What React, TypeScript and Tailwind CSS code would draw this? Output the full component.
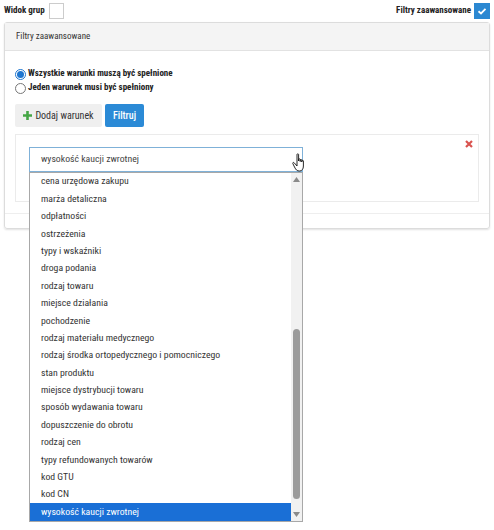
import React from 'react';

const OPTIONS = [
    'cena urzędowa zakupu',
    'marża detaliczna',
    'odpłatności',
    'ostrzeżenia',
    'typy i wskaźniki',
    'droga podania',
    'rodzaj towaru',
    'miejsce działania',
    'pochodzenie',
    'rodzaj materiału medycznego',
    'rodzaj środka ortopedycznego i pomocniczego',
    'stan produktu',
    'miejsce dystrybucji towaru',
    'sposób wydawania towaru',
    'dopuszczenie do obrotu',
    'rodzaj cen',
    'typy refundowanych towarów',
    'kod GTU',
    'kod CN',
    'wysokość kaucji zwrotnej',
];

const Radio = ({ checked, label }: { checked?: boolean; label: string }) => (
    <label className="flex items-center gap-[2px] h-[14px]">
        <span
            className={
                checked
                    ? 'w-[11px] h-[11px] rounded-full border border-[#1e76d0] bg-white flex items-center justify-center'
                    : 'w-[11px] h-[11px] rounded-full border border-[#777] bg-white'
            }
        >
            {checked && <span className="w-[7px] h-[7px] rounded-full bg-[#1e76d0]" />}
        </span>
        <span className="font-bold text-[9px] text-[#222]">{label}</span>
    </label>
);

export default function App() {
    return (
        <div
            className="relative w-[494px] h-[530px] bg-white text-[#333]"
            style={{ fontFamily: '"Roboto Condensed", Roboto, "Liberation Sans", sans-serif' }}
        >
            {/* Top toggles */}
            <div className="flex items-center justify-between pl-[4px] pr-[4px] pt-[3px] h-[19px]">
                <div className="flex items-center gap-[4px]">
                    <span className="font-bold text-[9px] text-[#222]">Widok grup</span>
                    <span className="w-[15px] h-[16px] border border-[#ccc] bg-white" />
                </div>
                <div className="flex items-center gap-[3px]">
                    <span className="font-bold text-[9px] text-[#222]">Filtry zaawansowane</span>
                    <span className="w-[16px] h-[16px] bg-[#2b88d2] flex items-center justify-center">
                        <svg width="10" height="10" viewBox="0 0 10 10">
                            <path d="M1.5 5.2 L4 7.4 L8.5 2.8" fill="none" stroke="white" strokeWidth="1.8" />
                        </svg>
                    </span>
                </div>
            </div>

            {/* Panel */}
            <div className="mx-[4px] mt-[3px] border border-[#dcdcdc] rounded-[3px] shadow-[0_1px_2px_rgba(0,0,0,0.12)]">
                <div className="h-[28px] bg-[#f4f4f4] border-b border-[#e2e2e2] flex items-center px-[11px] text-[9px] text-[#333]">
                    Filtry zaawansowane
                </div>

                <div className="px-[10px] pt-[16px]">
                    <Radio checked label="Wszystkie warunki muszą być spełnione" />
                    <Radio label="Jeden warunek musi być spełniony" />

                    <div className="flex gap-[3px] mt-[9px]">
                        <button className="h-[23px] w-[87px] bg-[#efefef] rounded-[2px] flex items-center justify-center gap-[3px] text-[10px] text-[#333]">
                            <svg width="9" height="9" viewBox="0 0 9 9">
                                <path d="M4.5 0 V9 M0 4.5 H9" stroke="#45a645" strokeWidth="2.6" />
                            </svg>
                            Dodaj warunek
                        </button>
                        <button className="h-[23px] w-[39px] bg-[#2b8ad6] rounded-[2px] text-[10px] font-medium text-white">
                            Filtruj
                        </button>
                    </div>

                    <div className="relative mt-[7px] h-[68px] border border-[#ebebeb] pt-[12px] pl-[13px]">
                        <div className="w-[274px] h-[25px] border border-[#7fb1d8] flex items-center pl-[11px] text-[9.75px] text-[#444]">
                            wysokość kaucji zwrotnej
                        </div>
                        <svg className="absolute right-[5px] top-[5px]" width="8" height="8" viewBox="0 0 8 8">
                            <path d="M1 1 L7 7 M7 1 L1 7" stroke="#d9534f" strokeWidth="2.2" />
                        </svg>
                    </div>
                </div>
                <div className="mt-[11px] h-[15px] border-t border-[#eeeeee]" />
            </div>

            {/* Open dropdown list */}
            <div className="absolute left-[29px] top-[172px] w-[274px] h-[350px] border border-[#a8a8a8] bg-white flex">
                <div className="flex-1">
                    {OPTIONS.map((o, i) => (
                        <div
                            key={o}
                            className={
                                i === OPTIONS.length - 1
                                    ? 'h-[17.4px] flex items-center pl-[11px] text-[9.75px] bg-[#1a6fd6] text-white'
                                    : 'h-[17.4px] flex items-center pl-[11px] text-[9.75px] text-[#333]'
                            }
                        >
                            {o}
                        </div>
                    ))}
                </div>
                <div className="w-[11px] bg-[#f1f1f1] flex flex-col items-center">
                    <svg className="mt-[4px]" width="7" height="5" viewBox="0 0 7 5">
                        <path d="M0 5 L3.5 0 L7 5 Z" fill="#8a8a8a" />
                    </svg>
                    <div className="flex-1 w-full flex flex-col justify-end pb-[13px]">
                        <div className="h-[170px] mx-[2px] rounded-[4px] bg-[#9b9b9b]" />
                    </div>
                    <svg className="mb-[4px]" width="7" height="5" viewBox="0 0 7 5">
                        <path d="M0 0 L3.5 5 L7 0 Z" fill="#8a8a8a" />
                    </svg>
                </div>
            </div>

            {/* Mouse cursor */}
            <svg
                className="absolute left-[292px] top-[153px]"
                width="16"
                height="20"
                viewBox="0 0 16 20"
            >
                <path
                    d="M5 1.5 C5 0.6 6.6 0.6 6.6 1.5 V8 V6.5 C6.6 5.6 8.2 5.6 8.2 6.5 V8.5 V7.2 C8.2 6.3 9.8 6.3 9.8 7.2 V9 V8 C9.8 7.1 11.4 7.1 11.4 8 V13 C11.4 16 10 18 7.5 18 C5 18 4 17 2.5 14 L0.8 10.5 C0.4 9.6 1.6 9 2.2 9.8 L5 13 Z"
                    fill="white"
                    stroke="#111"
                    strokeWidth="0.9"
                    strokeLinejoin="round"
                />
            </svg>
        </div>
    );
}
